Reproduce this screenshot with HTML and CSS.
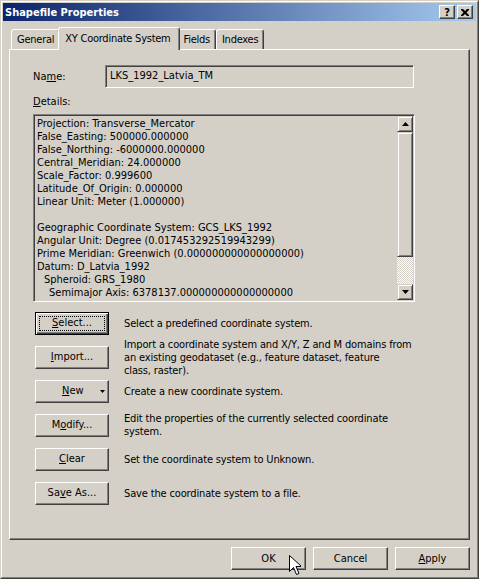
FILE: index.html
```html
<!DOCTYPE html>
<html lang="en">
<head>
    <meta charset="UTF-8">
    <title>Shapefile Properties</title>
    <link rel="stylesheet" href="styles.css">
</head>
<body>

<div class="window">
    <div class="frame">
        <div class="titlebar">
            <span class="title">Shapefile Properties</span>
            <div class="caption-buttons">
                <span class="cap-btn help">?</span>
                <span class="cap-btn">
                    <svg width="8" height="7" viewBox="0 0 8 7"><path d="M0 0h2l2 2 2-2h2v1l-2.5 2.5 2.5 2.5v1h-2l-2-2-2 2h-2v-1l2.5-2.5-2.5-2.5z" fill="#000"/></svg>
                </span>
            </div>
        </div>

        <div class="dialog">
            <div class="tabs">
                <span class="tab">General</span>
                <span class="tab active">XY Coordinate System</span>
                <span class="tab">Fields</span>
                <span class="tab">Indexes</span>
            </div>

            <div class="panel">
                <div class="name-row">
                    <label>Na<u>m</u>e:</label>
                    <div class="textbox">LKS_1992_Latvia_TM</div>
                </div>

                <div class="details-label"><u>D</u>etails:</div>
                <div class="details">
                    <div class="details-text">
                        <div>Projection: Transverse_Mercator</div>
                        <div>False_Easting: 500000.000000</div>
                        <div>False_Northing: -6000000.000000</div>
                        <div>Central_Meridian: 24.000000</div>
                        <div>Scale_Factor: 0.999600</div>
                        <div>Latitude_Of_Origin: 0.000000</div>
                        <div>Linear Unit: Meter (1.000000)</div>
                        <div>&nbsp;</div>
                        <div>Geographic Coordinate System: GCS_LKS_1992</div>
                        <div>Angular Unit: Degree (0.017453292519943299)</div>
                        <div>Prime Meridian: Greenwich (0.000000000000000000)</div>
                        <div>Datum: D_Latvia_1992</div>
                        <div class="indent1">Spheroid: GRS_1980</div>
                        <div class="indent2">Semimajor Axis: 6378137.000000000000000000</div>
                    </div>
                    <div class="scrollbar">
                        <div class="sb-btn">
                            <svg width="7" height="4" viewBox="0 0 7 4"><path d="M3.5 0L7 4H0z" fill="#000"/></svg>
                        </div>
                        <div class="sb-thumb"></div>
                        <div class="sb-track"></div>
                        <div class="sb-btn">
                            <svg width="7" height="4" viewBox="0 0 7 4"><path d="M0 0h7L3.5 4z" fill="#000"/></svg>
                        </div>
                    </div>
                </div>

                <div class="actions">
                    <div class="action">
                        <button class="btn default"><span class="focus-ring"></span><u>S</u>elect...</button>
                        <p>Select a predefined coordinate system.</p>
                    </div>
                    <div class="action">
                        <button class="btn"><u>I</u>mport...</button>
                        <p>Import a coordinate system and X/Y, Z and M domains from<br>an existing geodataset (e.g., feature dataset, feature<br>class, raster).</p>
                    </div>
                    <div class="action">
                        <button class="btn split"><span><u>N</u>ew</span>
                            <svg width="5" height="3" viewBox="0 0 5 3"><path d="M0 0h5L2.5 3z" fill="#000"/></svg>
                        </button>
                        <p>Create a new coordinate system.</p>
                    </div>
                    <div class="action">
                        <button class="btn">M<u>o</u>dify...</button>
                        <p>Edit the properties of the currently selected coordinate<br>system.</p>
                    </div>
                    <div class="action">
                        <button class="btn"><u>C</u>lear</button>
                        <p>Set the coordinate system to Unknown.</p>
                    </div>
                    <div class="action">
                        <button class="btn">Sa<u>v</u>e As...</button>
                        <p>Save the coordinate system to a file.</p>
                    </div>
                </div>
            </div>

            <div class="footer">
                <button class="btn wide">OK</button>
                <button class="btn wide">Cancel</button>
                <button class="btn wide"><u>A</u>pply</button>
            </div>
        </div>
    </div>

    <!-- mouse pointer resting on the OK button -->
    <svg class="cursor" width="12" height="21" viewBox="0 0 12 21">
        <path d="M0.5 0.5v16l4-4 3 7 2.5-1-3-7h5.5z" fill="#fff" stroke="#000" stroke-width="1"/>
    </svg>
</div>

</body>
</html>
```

FILE: styles.css
```css
body {
    margin: 0;
    background-color: #d4d0c8;
    font-family: Tahoma, "DejaVu Sans Condensed", "DejaVu Sans", sans-serif;
    font-size: 11px;
    color: #000;
}

.window {
    position: relative;
    width: 479px;
    height: 579px;
    box-sizing: border-box;
    border: 1px solid;
    border-color: #d4d0c8 #404040 #404040 #d4d0c8;
}

.frame {
    height: 100%;
    box-sizing: border-box;
    border: 1px solid;
    border-color: #fff #808080 #808080 #fff;
    padding: 1px;
    display: flex;
    flex-direction: column;
}

/* caption */
.titlebar {
    height: 18px;
    flex-shrink: 0;
    background: linear-gradient(to right, #0a246a, #a6caf0);
    display: flex;
    align-items: center;
    justify-content: space-between;
    padding: 0 3px 0 2px;
}

.title {
    color: #fff;
    font-weight: bold;
}

.caption-buttons {
    display: flex;
    gap: 2px;
}

.cap-btn {
    width: 16px;
    height: 14px;
    box-sizing: border-box;
    background-color: #d4d0c8;
    border: 1px solid;
    border-color: #fff #404040 #404040 #fff;
    box-shadow: inset -1px -1px #808080;
    display: flex;
    align-items: center;
    justify-content: center;
}

.help {
    font-weight: bold;
    font-size: 11px;
    line-height: 1;
}

/* dialog body */
.dialog {
    padding: 6px 6px 0 6px;
}

.tabs {
    height: 22px;
    display: flex;
    align-items: flex-end;
    padding-left: 2px;
    letter-spacing: -0.25px;
}

.tab {
    height: 20px;
    box-sizing: border-box;
    padding: 0 5px 0 5px;
    border: 1px solid;
    border-bottom: none;
    border-color: #fff #404040 transparent #fff;
    border-radius: 3px 3px 0 0;
    box-shadow: inset -1px 0 #808080;
    display: flex;
    align-items: center;
    background-color: #d4d0c8;
}

.tab.active {
    position: relative;
    z-index: 1;
    height: 23px;
    margin: 0 -2px -1px -2px;
    padding: 0 8px 2px 6px;
}

.panel {
    width: 461px;
    height: 491px;
    box-sizing: border-box;
    border: 1px solid;
    border-color: #fff #404040 #404040 #fff;
    box-shadow: inset -1px -1px #808080;
    padding-left: 23px;
}

.name-row {
    display: flex;
    align-items: center;
    margin-top: 15px;
}

.name-row label {
    width: 72px;
}

.textbox {
    width: 309px;
    height: 23px;
    box-sizing: border-box;
    border: 1px solid;
    border-color: #808080 #fff #fff #808080;
    box-shadow: inset 1px 1px #404040, inset -1px -1px #d4d0c8;
    padding-left: 4px;
    line-height: 20px;
}

.details-label {
    margin-top: 7px;
    line-height: 13px;
}

.details {
    width: 382px;
    height: 188px;
    margin-top: 6px;
    box-sizing: border-box;
    border: 1px solid;
    border-color: #808080 #fff #fff #808080;
    box-shadow: inset 1px 1px #404040, inset -1px -1px #d4d0c8;
    display: flex;
    padding: 1px;
}

.details-text {
    flex: 1;
    overflow: hidden;
    white-space: nowrap;
    line-height: 13px;
    padding: 1px 0 0 2px;
}

.indent1 {
    padding-left: 7px;
}

.indent2 {
    padding-left: 12px;
}

.scrollbar {
    width: 16px;
    display: flex;
    flex-direction: column;
}

.sb-btn,
.sb-thumb {
    box-sizing: border-box;
    background-color: #d4d0c8;
    border: 1px solid;
    border-color: #d4d0c8 #404040 #404040 #d4d0c8;
    box-shadow: inset 1px 1px #fff, inset -1px -1px #808080;
}

.sb-btn {
    height: 16px;
    display: flex;
    align-items: center;
    justify-content: center;
}

.sb-thumb {
    height: 125px;
}

.sb-track {
    flex: 1;
    background: repeating-conic-gradient(#fff 0 25%, #d4d0c8 0 50%) 0 0 / 2px 2px;
}

/* buttons with descriptions */
.actions {
    margin-top: 4px;
    padding-left: 2px;
}

.action {
    height: 34px;
    display: flex;
    align-items: center;
    gap: 15px;
}

.action p {
    margin: 0;
    line-height: 13px;
    white-space: nowrap;
    letter-spacing: -0.15px;
}

.btn {
    position: relative;
    flex-shrink: 0;
    width: 74px;
    height: 23px;
    box-sizing: border-box;
    padding: 0;
    background-color: #d4d0c8;
    border: 1px solid;
    border-color: #fff #404040 #404040 #fff;
    box-shadow: inset -1px -1px #808080;
    font-family: inherit;
    font-size: 11px;
    font-weight: 400;
    line-height: 20px;
    color: #000;
    display: flex;
    align-items: center;
    justify-content: center;
}

.btn.default {
    border-color: #000;
    box-shadow: inset 1px 1px #fff, inset -1px -1px #404040, inset -2px -2px #808080;
}

.focus-ring {
    position: absolute;
    top: 3px;
    left: 3px;
    right: 3px;
    bottom: 3px;
    border: 1px dotted #000;
}

.btn.split {
    justify-content: flex-start;
    padding-left: 26px;
    gap: 16px;
}

.btn.wide {
    width: 75px;
}

.footer {
    display: flex;
    justify-content: flex-end;
    gap: 7px;
    margin-top: 7px;
}

.cursor {
    position: absolute;
    left: 288px;
    top: 554px;
}
```
